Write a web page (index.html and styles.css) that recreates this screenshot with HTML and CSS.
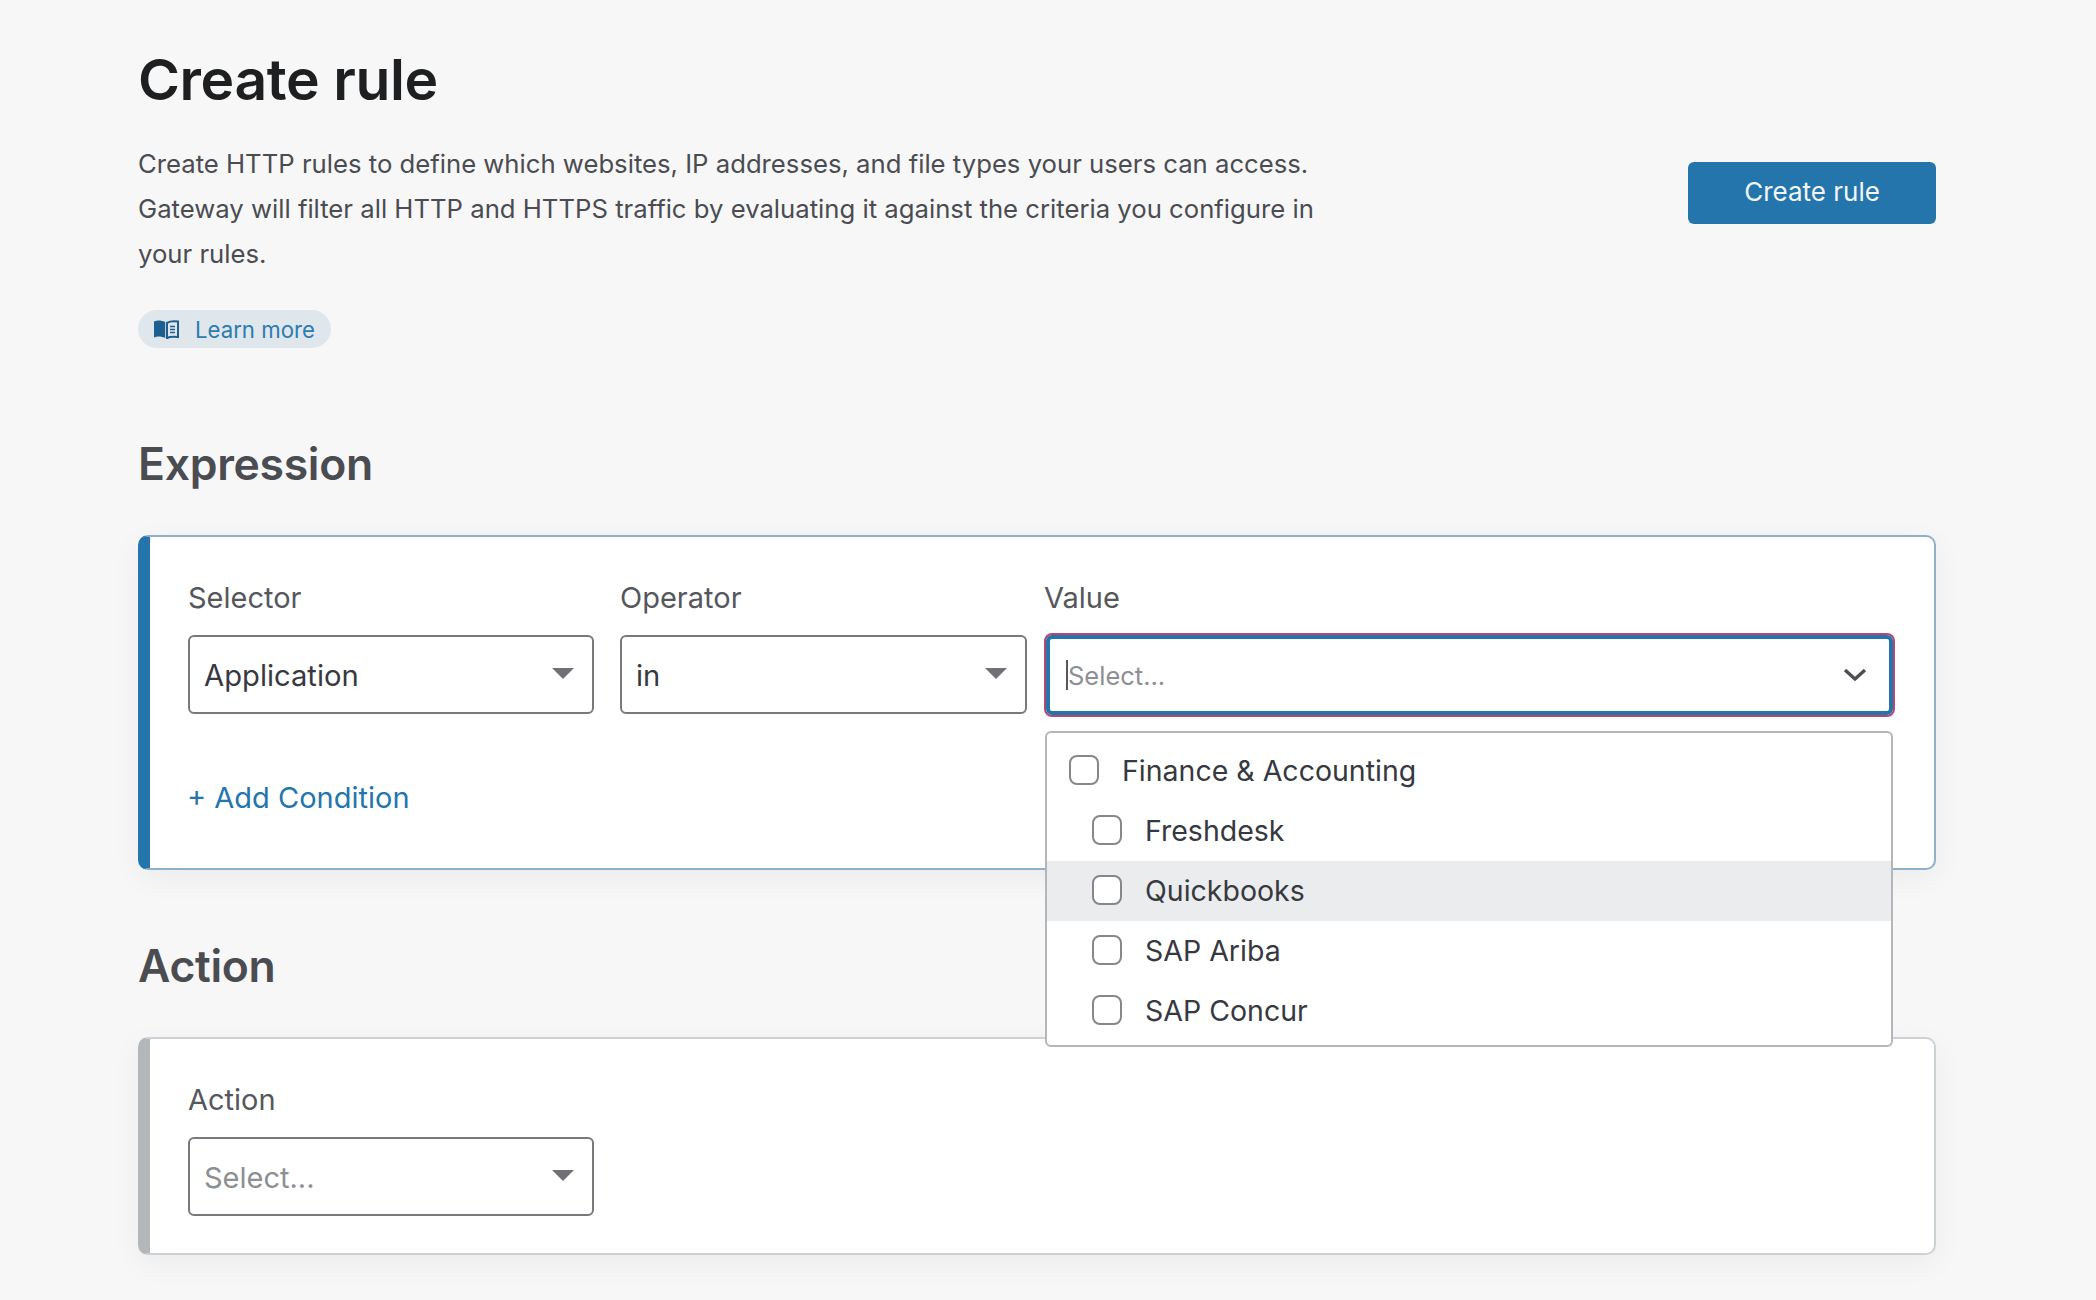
FILE: index.html
```html
<!DOCTYPE html>
<html lang="en">
<head>
    <meta charset="UTF-8">
    <title>Create rule</title>
    <link rel="stylesheet" href="styles.css">
</head>
<body>
    <main class="page">
        <header class="page-head">
            <div class="intro">
                <h1>Create rule</h1>
                <p>Create HTTP rules to define which websites, IP addresses, and file types your users can access. Gateway will filter all HTTP and HTTPS traffic by evaluating it against the criteria you configure in your rules.</p>
                <a class="learn-more" href="#">
                    <svg class="book" viewBox="0 0 26 20" width="26" height="20">
                        <path fill="#1f5f8f" d="M1 2.5 C4 1 8 1 12.2 3 V19 C8 17 4 17 1 18.5 Z"/>
                        <path fill="none" stroke="#1f5f8f" stroke-width="2" d="M14 3.8 C17 2 21 2 25 2.5 V18 C21 17.4 17 17.4 14 19 Z"/>
                        <path stroke="#1f5f8f" stroke-width="1.5" d="M17 7.5 H22 M17 10.5 H22 M17 13.5 H22"/>
                    </svg>
                    Learn more
                </a>
            </div>
            <button class="primary" type="button">Create rule</button>
        </header>

        <h2>Expression</h2>
        <section class="card card-active">
            <div class="fields">
                <div class="field">
                    <label>Selector</label>
                    <div class="select"><span>Application</span><i class="caret"></i></div>
                </div>
                <div class="field">
                    <label>Operator</label>
                    <div class="select"><span>in</span><i class="caret"></i></div>
                </div>
                <div class="field field-value">
                    <label>Value</label>
                    <div class="select select-focus">
                        <span class="placeholder"><b class="cursor"></b>Select...</span>
                        <svg viewBox="0 0 24 14" width="24" height="14">
                            <path fill="none" stroke="#4d4f55" stroke-width="3.4" d="M2 2 L12 11 L22 2"/>
                        </svg>
                    </div>
                    <ul class="menu">
                        <li><i class="check"></i>Finance &amp; Accounting</li>
                        <li class="sub"><i class="check"></i>Freshdesk</li>
                        <li class="sub hover"><i class="check"></i>Quickbooks</li>
                        <li class="sub"><i class="check"></i>SAP Ariba</li>
                        <li class="sub"><i class="check"></i>SAP Concur</li>
                    </ul>
                </div>
            </div>
            <a class="add-condition" href="#">+ Add Condition</a>
        </section>

        <h2 class="action-title">Action</h2>
        <section class="card card-idle">
            <div class="fields">
                <div class="field">
                    <label>Action</label>
                    <div class="select"><span class="placeholder">Select...</span><i class="caret"></i></div>
                </div>
            </div>
        </section>
    </main>
</body>
</html>
```

FILE: styles.css
```css
* {
    box-sizing: border-box;
}

body {
    margin: 0;
    height: 1300px;
    overflow: hidden;
    background: #f7f7f7;
    color: #36393f;
    font-family: 'Inter', 'Liberation Sans', sans-serif;
}

.page {
    width: 1798px;
    margin-left: 138px;
    padding-top: 44px;
}

.page-head {
    display: flex;
    justify-content: space-between;
    align-items: flex-start;
}

.intro {
    width: 1200px;
}

h1 {
    margin: 0 0 25px;
    font-size: 57px;
    line-height: 72px;
    font-weight: 600;
    color: #1d1f20;
    letter-spacing: -0.4px;
}

.intro p {
    margin: 0 0 34px;
    font-size: 25.7px;
    line-height: 45px;
    color: #4a4c52;
}

.learn-more {
    display: flex;
    align-items: center;
    gap: 16px;
    width: fit-content;
    height: 38px;
    padding: 0 16px 0 15px;
    border-radius: 19px;
    background: #dfe6ec;
    color: #2c7cb0;
    font-size: 22.2px;
    text-decoration: none;
}

.primary {
    width: 248px;
    height: 62px;
    margin-top: 118px;
    padding: 0 0 3px;
    border: none;
    border-radius: 6px;
    background: #2475ac;
    color: #f3f6f8;
    font-family: inherit;
    font-size: 26px;
}

h2 {
    margin: 88px 0 0;
    font-size: 44.5px;
    line-height: 56px;
    font-weight: 600;
    color: #4a4c52;
    letter-spacing: -0.3px;
}

h2.action-title {
    margin-top: 68px;
}

.card {
    margin-top: 43px;
    padding: 42px 38px 0;
    background: #fff;
    border-radius: 10px;
    border: 2px solid #ccd1d6;
    border-left: 12px solid #b4b7ba;
    box-shadow: 0 8px 30px rgba(0, 0, 0, 0.05);
}

.card-active {
    height: 335px;
    border-color: #8fb0cb;
    border-left-color: #2475ac;
}

.card-idle {
    height: 218px;
}

.fields {
    display: grid;
    grid-template-columns: 406px 407px 842px;
    column-gap: 26px;
}

.field-value {
    position: relative;
    margin-left: -9px;
}

label {
    display: block;
    margin-bottom: 18px;
    font-size: 29px;
    line-height: 38px;
    color: #55575d;
}

.select {
    display: flex;
    justify-content: space-between;
    align-items: center;
    height: 79px;
    padding: 2px 18px 0 14px;
    border: 2px solid #77797e;
    border-radius: 6px;
    font-size: 29.2px;
    color: #36393f;
}

.caret {
    width: 0;
    height: 0;
    margin-top: -4px;
    border-left: 11px solid transparent;
    border-right: 11px solid transparent;
    border-top: 11px solid #6f7176;
}

.placeholder {
    color: #8d8f94;
    font-size: 29px;
}

.select-focus {
    height: 80px;
    margin: 3px 2px 2px;
    padding: 0 22px 0 16px;
    border: 4px solid #2475ac;
    box-shadow: 0 0 0 2px #b5476f;
}

.select-focus .placeholder {
    display: flex;
    align-items: center;
    font-size: 25.5px;
}

.cursor {
    width: 2px;
    height: 30px;
    background: #55575d;
}

.menu {
    position: absolute;
    top: 152px;
    left: 1px;
    width: 848px;
    margin: 0;
    padding: 8px 0 4px;
    list-style: none;
    background: #fff;
    border: 2px solid #b4b6b9;
    border-radius: 6px;
    z-index: 2;
}

.menu li {
    display: flex;
    align-items: center;
    gap: 23px;
    height: 60px;
    padding-left: 22px;
    padding-bottom: 2px;
    font-size: 28.5px;
    color: #36393f;
}

.menu li.sub {
    padding-left: 45px;
}

.menu li.hover {
    background: #ebeced;
}

.check {
    width: 30px;
    height: 30px;
    border: 2px solid #85878b;
    border-radius: 8px;
    background: #fff;
}

.add-condition {
    display: block;
    margin-top: 62px;
    margin-left: -1px;
    font-size: 29px;
    line-height: 38px;
    color: #2475ac;
    text-decoration: none;
}
```
